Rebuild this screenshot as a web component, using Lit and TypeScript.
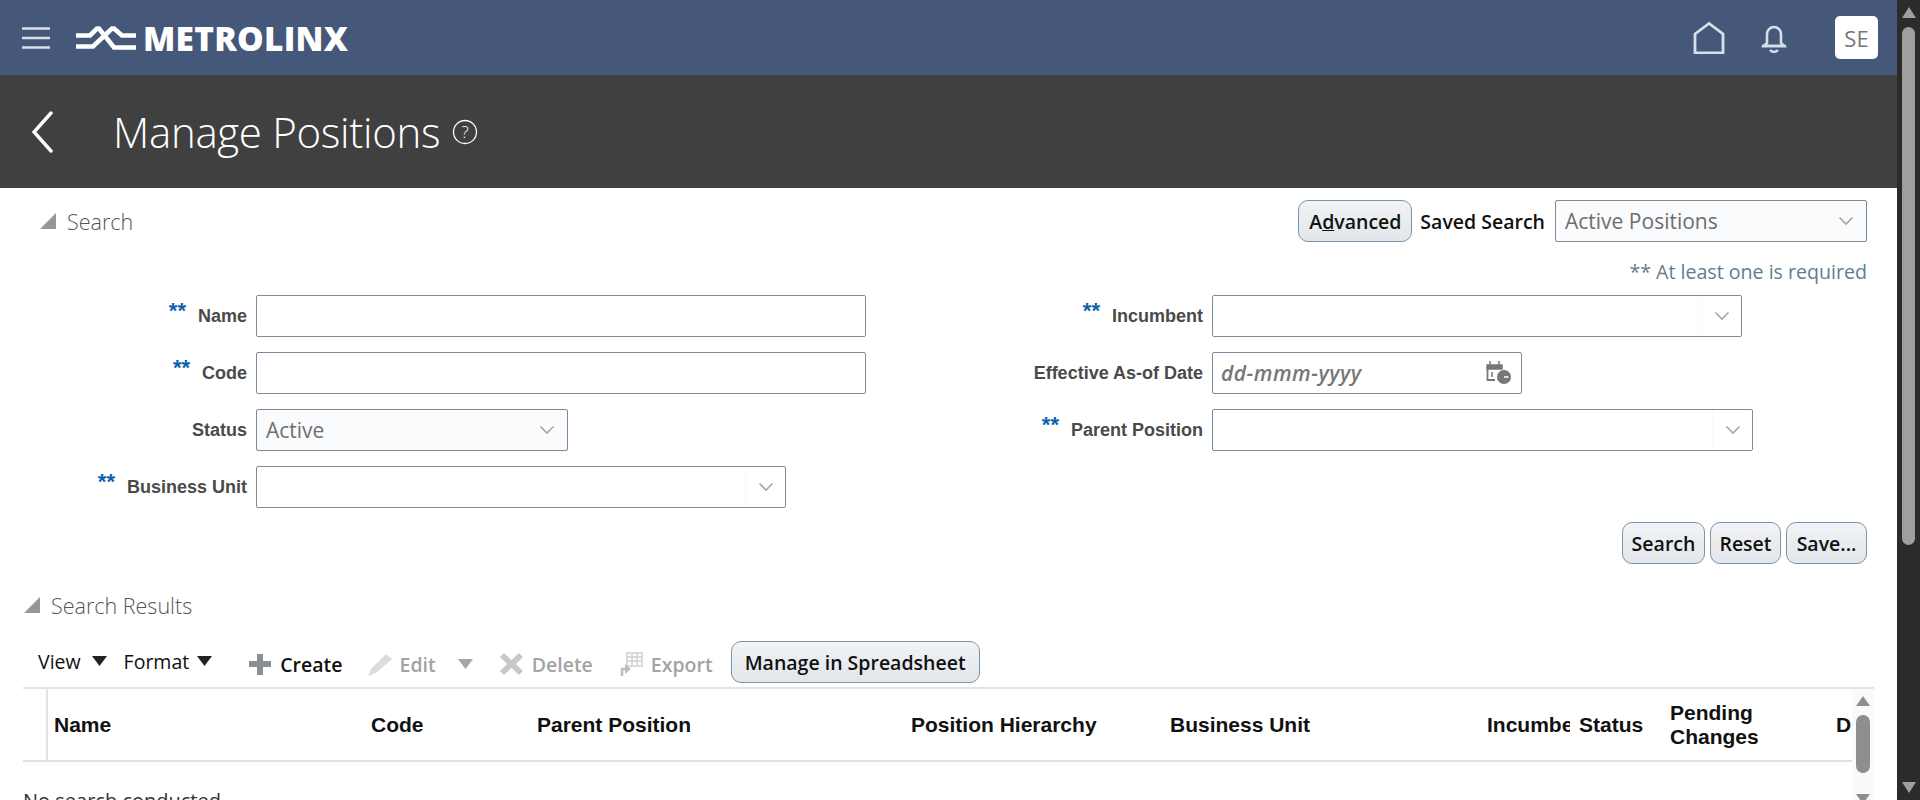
import { LitElement, html, css, svg } from 'lit';
import { customElement } from 'lit/decorators.js';

const chevron = html`<span class="chev"><svg width="16" height="10" viewBox="0 0 16 10"><path d="M1.5 1.5 8 8l6.5-6.5" fill="none" stroke="#a6a6a6" stroke-width="1.6"/></svg></span>`;

const columns = [
  { label: 'Name', width: 317 },
  { label: 'Code', width: 166 },
  { label: 'Parent Position', width: 374 },
  { label: 'Position Hierarchy', width: 259 },
  { label: 'Business Unit', width: 317 },
  { label: 'Incumbent', width: 92, cut: true },
  { label: 'Status', width: 91 },
  { label: 'Pending Changes', width: 166, wrap: true },
  { label: 'D', width: 24 },
];

@customElement('form-row')
export class FormRow extends LitElement {
  static properties = {
    label: { type: String },
    req: { type: Boolean },
  };
  label = '';
  req = false;

  static styles = css`
    :host { display: flex; align-items: center; gap: 9px; height: 41px; }
    .lab {
      flex: 1;
      text-align: right;
      font: bold 18px/24px 'Liberation Sans', sans-serif;
      color: #4a4a4a;
      white-space: nowrap;
    }
    .req { color: #0b63ad; margin-right: 12px; font-size: 22px; position: relative; top: -4px; }
  `;

  render() {
    return html`<div class="lab">${this.req ? html`<span class="req">**</span>` : ''}${this.label}</div><slot></slot>`;
  }
}

@customElement('app-root')
export class AppRoot extends LitElement {
  static styles = css`
    :host { display: flex; width: 1920px; height: 800px; overflow: hidden; background: #fff; font-family: 'Open Sans', sans-serif; }
    .page { width: 1897px; flex: none; height: 800px; overflow: hidden; }

    .sb { width: 23px; background: #2b2b2b; display: flex; flex-direction: column; align-items: center; padding: 7px 0; box-sizing: border-box; }
    .sb .thumb { width: 13px; height: 518px; margin-top: 9px; border-radius: 7px; background: #9f9f9f; }
    .sb .grow { flex: 1; }

    .top { height: 75px; background: #46587a; display: flex; align-items: center; padding: 0 19px 0 22px; box-sizing: border-box; }
    .logo-word { font: 800 33.5px 'Open Sans', sans-serif; color: #fff; letter-spacing: 0.2px; margin-left: 7px; }
    .burger { margin-right: 26px; }
    .top-right { margin-left: auto; display: flex; align-items: center; }
    .avatar { width: 43px; height: 43px; border-radius: 5px; background: #fff; color: #777; font-size: 22px; display: flex; align-items: center; justify-content: center; margin-left: 48px; }
    .bell { margin-left: 36px; }

    .title-bar { height: 113px; background: #404040; display: flex; align-items: center; padding-left: 32px; color: #fff; }
    .title-bar h1 { font-weight: 300; font-size: 42px; margin: 0 0 0 57px; white-space: nowrap; letter-spacing: -0.3px; }
    .help { margin-left: 12px; }

    .search-head { display: flex; align-items: center; padding: 12px 30px 0 40px; height: 42px; }
    .disc { width: 0; height: 0; border-style: solid; border-width: 0 0 16px 16px; border-color: transparent transparent #969696 transparent; margin-right: 11px; }
    .sec-title { font-weight: 300; font-size: 21.5px; color: #555; }
    .search-tools { margin-left: auto; display: flex; align-items: center; }
    .saved { font-size: 19.5px; font-weight: 600; color: #111; margin: 0 10px 0 8px; white-space: nowrap; }
    .btn {
      height: 42px;
      box-sizing: border-box;
      border: 1px solid #7c93aa;
      border-radius: 10px;
      background: linear-gradient(#f1f3f5, #e2e6ea);
      font: 600 19.5px 'Open Sans', sans-serif;
      color: #111;
      display: inline-flex;
      align-items: center;
      justify-content: center;
      white-space: nowrap;
    }
    .select, .input {
      box-sizing: border-box;
      height: 42px;
      border: 1px solid #7c8b99;
      border-radius: 2px;
      background: #fff;
      display: flex;
      align-items: center;
      padding: 0 0 0 9px;
      font-size: 21px;
      color: #6e6e6e;
      white-space: nowrap;
    }
    .select.ro { background: #fafbfd; }
    .chev { margin-left: auto; flex: none; width: 40px; height: 40px; display: flex; align-items: center; justify-content: center; border-left: 1px solid #f9f9f9; box-sizing: border-box; }
    .select.ro .chev { border-left: 0; }
    .input { padding-left: 8px; }
    .input i { font-size: 21px; font-weight: 600; letter-spacing: 0.5px; color: #777; }
    .cal { margin-left: auto; margin-right: 9px; }

    .req-note { text-align: right; padding-right: 30px; font-size: 19.6px; color: #5f7d8f; margin-top: 16px; height: 36px; }

    .form { display: grid; grid-template-columns: 866px 887px; margin-top: 1px; }
    .col { display: flex; flex-direction: column; gap: 16px; }

    .actions { display: flex; justify-content: flex-end; gap: 5px; padding-right: 30px; margin-top: 15px; }

    .results-head { display: flex; align-items: center; padding-left: 24px; height: 24px; margin-top: 29px; }

    .toolbar { display: flex; align-items: center; height: 42px; margin-top: 24px; padding-left: 38px; font-size: 19.5px; }
    .tool { display: flex; align-items: center; color: #111; font-weight: 600; white-space: nowrap; position: relative; top: 2px; }
    .tool.plain { font-weight: 400; top: -1px; }
    .tool.off { color: #a3a3a3; }
    .tool svg { flex: none; }
    .arrow { margin-left: 8px; }
    .table { margin: 4px 23px 0 23px; border-top: 2px solid #dde4ea; position: relative; }
    .thead { display: flex; height: 73px; width: 1829px; border-bottom: 2px solid #dde4ea; box-sizing: border-box; }
    .sel { width: 23px; border-right: 2px solid #dde4ea; flex: none; }
    .th { box-sizing: border-box; padding-left: 6px; font: bold 21px/24px 'Liberation Sans', sans-serif; color: #111; overflow: hidden; display: flex; align-items: center; flex: none; white-space: nowrap; }
    .th span { display: block; min-width: 0; overflow: hidden; }
    .th.cut { padding-right: 3px; }
    .th.wrap span { white-space: normal; width: 110px; }
    .empty { font-size: 20px; margin-top: 25px; color: #333; }

    .tsb { position: absolute; right: 0; top: 0; width: 22px; height: 120px; background: #fafafa; display: flex; flex-direction: column; align-items: center; }
    .tsb svg, .tsb .thumb { flex: none; }
    .tsb .thumb { width: 14px; height: 58px; background: #8e8e8e; border-radius: 7px; margin: 9px 0 21px; }
  `;

  private icon(paths: unknown, w: number, h: number, cls = '') {
    return html`<svg class=${cls} width=${w} height=${h} viewBox="0 0 ${w} ${h}">${paths}</svg>`;
  }

  private arrow(color: string, style = '') {
    return html`<svg class="arrow" style=${style} width="15" height="10" viewBox="0 0 15 10"><path d="M0 0h15L7.5 10z" fill=${color}/></svg>`;
  }

  render() {
    return html`
      <div class="page">
        <div class="top">
          ${this.icon(svg`<path d="M0 1.500h28M0 11h28M0 20.500h28" stroke="#d9e0ea" stroke-width="2.600"/>`, 28, 22, 'burger')}
          <svg width="60" height="26" viewBox="0 0 60 26" fill="none" stroke="#fff" stroke-width="4.600">
            <path d="M0 10.500H14L21 3.500h2L38 22.500H60"/>
            <path d="M0 21.500H17L36 3.500h2L46 10.500H60"/>
          </svg>
          <span class="logo-word">METROLINX</span>
          <div class="top-right">
            ${this.icon(svg`<path d="M2 13 16 2.500 30 13v19H2z" fill="none" stroke="#d6dfea" stroke-width="2.800"/>`, 32, 33)}
            ${this.icon(svg`<path d="M6 21V12a7 7 0 0 1 14 0v9l3 3H3z" fill="none" stroke="#d6dfea" stroke-width="2.600"/><path d="M1 24h24" stroke="#d6dfea" stroke-width="2.600"/><path d="M9 28c2 2.500 6 2.500 8 0" fill="none" stroke="#d6dfea" stroke-width="2.400"/>`, 26, 31, 'bell')}
            <div class="avatar">SE</div>
          </div>
        </div>

        <div class="title-bar">
          ${this.icon(svg`<path d="M19 2 2 21l17 19" fill="none" stroke="#fff" stroke-width="3.400" stroke-linecap="round"/>`, 24, 42)}
          <h1>Manage Positions</h1>
          <svg class="help" width="26" height="26" viewBox="0 0 26 26"><circle cx="13" cy="13" r="11.500" fill="none" stroke="#fff" stroke-width="1.300"/><text x="13" y="19" text-anchor="middle" fill="#fff" font-size="17" font-family="Open Sans" font-weight="300">?</text></svg>
        </div>

        <div class="search-head">
          <span class="disc"></span><span class="sec-title">Search</span>
          <div class="search-tools">
            <span class="btn" style="width:114px"><span>A<u>d</u>vanced</span></span>
            <span class="saved">Saved Search</span>
            <div class="select ro" style="width:312px">Active Positions ${chevron}</div>
          </div>
        </div>
        <div class="req-note">** At least one is required</div>

        <div class="form">
          <div class="col">
            <form-row label="Name" req style="width:866px"><div class="input" style="width:610px"></div></form-row>
            <form-row label="Code" req style="width:866px"><div class="input" style="width:610px"></div></form-row>
            <form-row label="Status" style="width:568px"><div class="select ro" style="width:312px">Active ${chevron}</div></form-row>
            <form-row label="Business Unit" req style="width:786px"><div class="select" style="width:530px">${chevron}</div></form-row>
          </div>
          <div class="col">
            <form-row label="Incumbent" req style="width:876px"><div class="select" style="width:530px">${chevron}</div></form-row>
            <form-row label="Effective As-of Date" style="width:656px"><div class="input" style="width:310px"><i>dd-mmm-yyyy</i>
              <svg class="cal" width="26" height="24" viewBox="0 0 26 24"><path d="M1 4h15v4H1zM4 0v4M13 0v4" fill="#777" stroke="#777" stroke-width="1.500"/><path d="M1.500 8v11H9" fill="none" stroke="#777" stroke-width="1.800"/><path d="M6 11v5" stroke="#777" stroke-width="1.500"/><circle cx="18" cy="16" r="7" fill="#777"/><path d="M18 16h4.500" stroke="#fff" stroke-width="1.500"/></svg>
            </div></form-row>
            <form-row label="Parent Position" req style="width:887px"><div class="select" style="width:541px">${chevron}</div></form-row>
          </div>
        </div>

        <div class="actions">
          <span class="btn" style="width:83px">Search</span>
          <span class="btn" style="width:71px">Reset</span>
          <span class="btn" style="width:81px">Save...</span>
        </div>

        <div class="results-head"><span class="disc"></span><span class="sec-title">Search Results</span></div>

        <div class="toolbar">
          <span class="tool plain">View${this.arrow('#222', 'margin-left:11px')}</span>
          <span class="tool plain" style="margin-left:17px">Format${this.arrow('#222')}</span>
          <span class="tool" style="margin-left:37px">
            ${this.icon(svg`<path d="M8 0h6v7h8v6h-8v8H8v-8H0V7h8z" fill="#8d9093"/>`, 22, 21)}<span style="margin-left:9px">Create</span>
          </span>
          <span class="tool off" style="margin-left:25px">
            ${this.icon(svg`<path d="M0 24l3-7L18 2l6 5L8 21z" fill="#dcdcdc"/>`, 25, 24)}<span style="margin-left:7px">Edit</span>
            ${this.arrow('#a6a6a6', 'margin-left:22px')}
          </span>
          <span class="tool off" style="margin-left:27px">
            ${this.icon(svg`<path d="M4 0l7.500 7L19 0l4 4-7 7 7 7-4 4-7.500-7L4 22l-4-4 7-7-7-7z" fill="#c6c8ca"/>`, 23, 22)}<span style="margin-left:9px">Delete</span>
          </span>
          <span class="tool off" style="margin-left:26px">
            ${this.icon(svg`<path d="M8 1h15v13H8zM8 5h15M8 9h15M13 1v13M18 1v13" fill="none" stroke="#d0d0d0" stroke-width="1.500"/><path d="M3 24v-7h5" fill="none" stroke="#bdbdbd" stroke-width="2.500"/><path d="M6 12l6 5-6 5z" fill="#bdbdbd"/>`, 24, 24)}<span style="margin-left:8px">Export</span>
          </span>
          <span class="btn" style="width:249px;margin-left:18px">Manage in Spreadsheet</span>
        </div>

        <div class="table">
          <div class="thead">
            <div class="sel"></div>
            ${columns.map((c) => html`<div class="th ${c.cut ? 'cut' : ''} ${c.wrap ? 'wrap' : ''}" style="width:${c.width}px"><span>${c.label}</span></div>`)}
          </div>
          <div class="tsb">
            <svg style="margin-top:7px" width="14" height="10" viewBox="0 0 14 10"><path d="M7 0l7 10H0z" fill="#8e8e8e"/></svg>
            <div class="thumb"></div>
            <svg width="14" height="10" viewBox="0 0 14 10"><path d="M7 10l7-10H0z" fill="#8e8e8e"/></svg>
          </div>
          <div class="empty">No search conducted.</div>
        </div>
      </div>
      <div class="sb">
        <svg width="14" height="11" viewBox="0 0 14 11"><path d="M7 0l7 11H0z" fill="#9f9f9f"/></svg>
        <div class="thumb"></div>
        <div class="grow"></div>
        <svg width="14" height="11" viewBox="0 0 14 11"><path d="M7 11l7-11H0z" fill="#9f9f9f"/></svg>
      </div>
    `;
  }
}
